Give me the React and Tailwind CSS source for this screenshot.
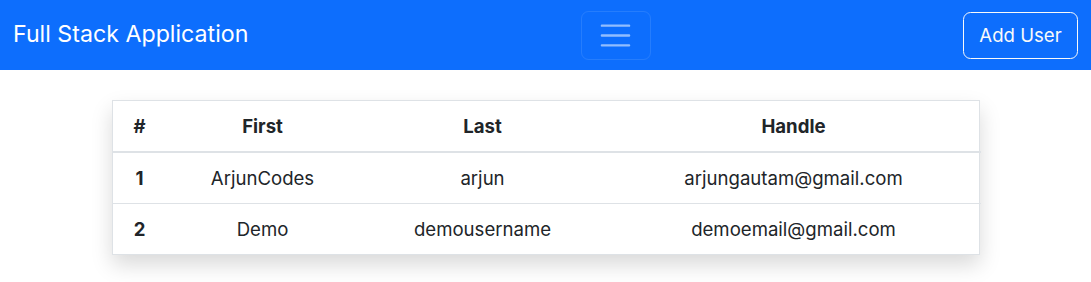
export default function App() {
  const users = [
    { id: 1, name: "ArjunCodes", username: "arjun", email: "arjungautam@gmail.com" },
    { id: 2, name: "Demo", username: "demousername", email: "demoemail@gmail.com" },
  ];

  return (
    <div className="min-h-[282px] bg-white font-['Inter',sans-serif] text-[#212529]">
      {/* Navbar */}
      <nav className="flex h-[70px] items-center justify-between bg-[#0d6efd] px-[13px]">
        <a href="#" className="mr-5 text-[23.2px] leading-[37.5px] text-white">
          Full Stack Application
        </a>
        <button className="flex h-[49px] w-[70px] items-center justify-center rounded-[7.5px] border border-white/10">
          <svg width="37" height="37" viewBox="0 0 30 30">
            <path
              d="M4 7h22M4 15h22M4 23h22"
              stroke="rgba(255,255,255,0.55)"
              strokeWidth="2"
              strokeLinecap="round"
            />
          </svg>
        </button>
        <button className="h-[47px] w-[115px] rounded-[7.5px] border border-[#f8f9fa] text-[18.6px] leading-[30px] text-[#f8f9fa]">
          Add User
        </button>
      </nav>

      {/* Users table */}
      <div className="mx-auto mt-[30px] w-[868px] border border-[#dee2e6] shadow-[0_10px_20px_rgba(0,0,0,0.15)]">
        <table className="w-full table-fixed border-collapse text-center text-[18.6px] leading-[30px]">
          <colgroup>
            <col className="w-[54px]" />
            <col className="w-[192px]" />
            <col className="w-[248px]" />
            <col className="w-[374px]" />
          </colgroup>
          <thead>
            <tr className="border-b-2 border-[#dee2e6]">
              <th className="p-[10px] font-bold">#</th>
              <th className="p-[10px] font-bold">First</th>
              <th className="p-[10px] font-bold">Last</th>
              <th className="p-[10px] font-bold">Handle</th>
            </tr>
          </thead>
          <tbody>
            {users.map((u, i) => (
              <tr key={u.id} className={i < users.length - 1 ? "border-b border-[#dee2e6]" : ""}>
                <th className="p-[10px] font-bold">{u.id}</th>
                <td className="p-[10px]">{u.name}</td>
                <td className="p-[10px]">{u.username}</td>
                <td className="p-[10px]">{u.email}</td>
              </tr>
            ))}
          </tbody>
        </table>
      </div>
    </div>
  );
}
